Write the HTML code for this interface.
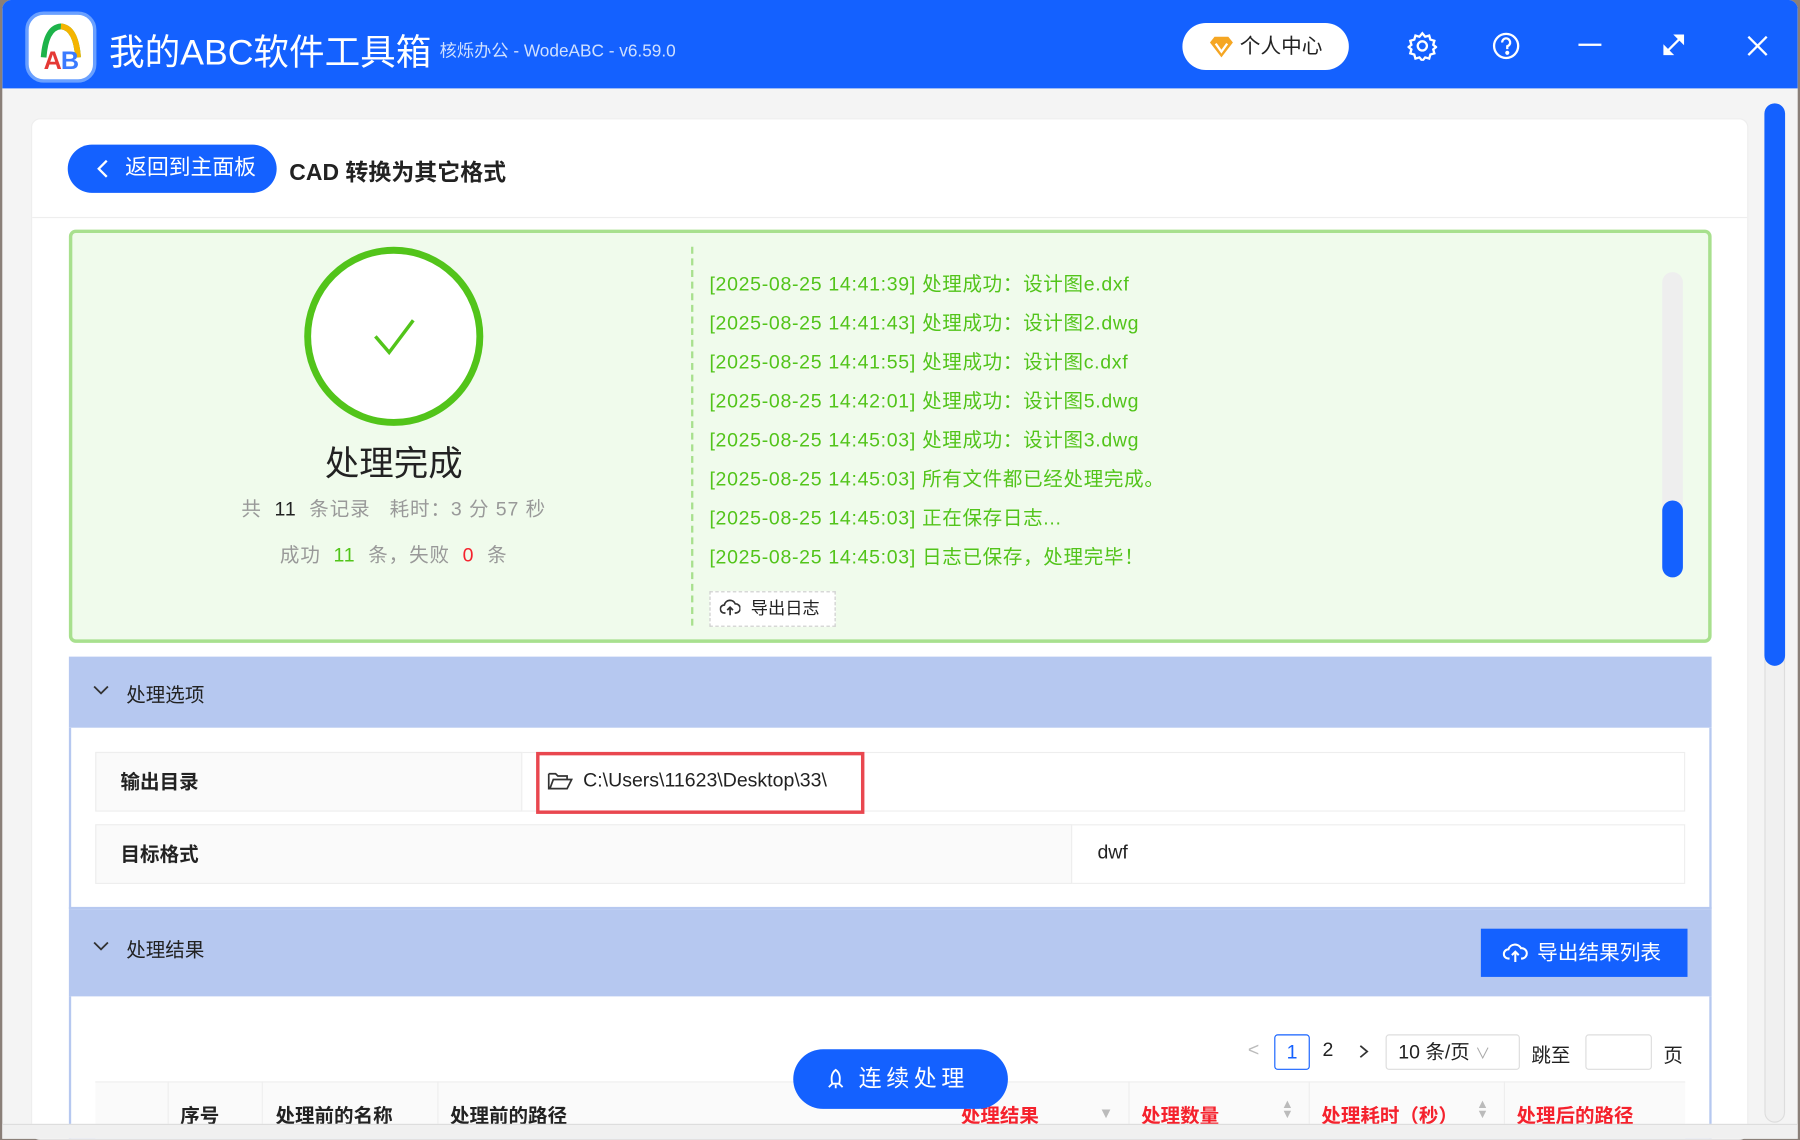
<!DOCTYPE html><html><head><meta charset="utf-8"><style>
*{box-sizing:border-box;margin:0;padding:0}
html,body{width:1800px;height:1139px;overflow:hidden;background:#8a7f78}
#w{position:absolute;left:0;top:0;width:1568px;height:992px;transform:scale(1.14796);transform-origin:0 0;font-family:"Liberation Sans","Noto Sans CJK SC",sans-serif;color:#222}
.a{position:absolute}
.log{position:absolute;left:618px;font-size:17px;color:#52c41a;white-space:nowrap;letter-spacing:0.6px}
.th{position:absolute;top:958px;font-size:17px;font-weight:bold}
</style></head><body><div id="w">
<div class="a" style="left:2px;top:0;width:1564px;height:992px;background:#f4f4f4;border-radius:8px 8px 0 0;overflow:hidden">
<div class="a" style="left:0;top:0;width:1564px;height:77px;background:#1461ff"></div>
</div>
<div class="a" style="left:22px;top:10px;width:62px;height:62px;background:#fff;border-radius:16px;border:3px solid #6aa0ff"></div>
<svg class="a" style="left:22px;top:10px" width="62" height="62"><path d="M16 40 Q18 14 31 13 Q44 14 46 40" fill="none" stroke="#1db34a" stroke-width="5"/><path d="M31 13 Q44 14 46 40" fill="none" stroke="#f5b400" stroke-width="5"/><text x="16" y="50" font-size="22" font-weight="bold" fill="#e53935" font-family="Liberation Sans">A</text><text x="31" y="50" font-size="22" font-weight="bold" fill="#3b7bff" font-family="Liberation Sans">B</text></svg>
<div class="a" style="left:95px;top:20px;font-size:31px;color:#fff">我的ABC软件工具箱</div>
<div class="a" style="left:383px;top:33px;font-size:15px;color:#cfe0ff">核烁办公 - WodeABC - v6.59.0</div>
<div class="a" style="left:1030px;top:20px;width:145px;height:41px;background:#fff;border-radius:21px;font-size:18px;line-height:41px;padding-left:50px">个人中心</div>
<svg class="a" style="left:1052px;top:30px" width="24" height="22"><path d="M2 7 L6 2 H18 L22 7 L12 20Z" fill="#f5a623"/><path d="M7 8 L12 15 L17 8" fill="none" stroke="#fff" stroke-width="2"/></svg>
<svg class="a" style="left:1226px;top:27px" width="26" height="26" fill="none" stroke="#fff" stroke-width="2"><circle cx="13" cy="13" r="4"/><path d="M13 2 l2.5 3 3.5-1 1 3.5 3.5 1-1 3.5 2.5 2-2.5 2 1 3.5-3.5 1-1 3.5-3.5-1-2.5 3-2.5-3-3.5 1-1-3.5-3.5-1 1-3.5-2.5-2 2.5-2-1-3.5 3.5-1 1-3.5 3.5 1z"/></svg>
<svg class="a" style="left:1299px;top:27px" width="26" height="26" fill="none" stroke="#fff" stroke-width="2"><circle cx="13" cy="13" r="10.5"/><path d="M9.5 10 a3.5 3.5 0 1 1 4.5 3.3 v2.5"/><circle cx="14" cy="19" r=".8" fill="#fff"/></svg>
<div class="a" style="left:1375px;top:38px;width:20px;height:2px;background:#fff"></div>
<svg class="a" style="left:1448px;top:29px" width="20" height="20" stroke="#fff" stroke-width="2" fill="#fff"><path d="M3 17 L17 3"/><path d="M2 18 v-6 l6 6z M18 2 v6 l-6-6z"/></svg>
<svg class="a" style="left:1521px;top:30px" width="20" height="20" stroke="#fff" stroke-width="2"><path d="M2 2 L18 18 M18 2 L2 18"/></svg>
<div class="a" style="left:27px;top:103px;width:1496px;height:890px;background:#fff;border-radius:8px;border:1px solid #eee"></div>
<div class="a" style="left:28px;top:189px;width:1494px;height:1px;background:#eee"></div>
<div class="a" style="left:59px;top:126px;width:182px;height:42px;background:#1461ff;border-radius:21px;color:#fff;font-size:19px;line-height:42px;padding-left:50px">返回到主面板</div>
<svg class="a" style="left:83px;top:138px" width="14" height="18" stroke="#fff" stroke-width="2" fill="none"><path d="M10 2 L3 9 L10 16"/></svg>
<div class="a" style="left:252px;top:134px;font-size:20px;font-weight:bold">CAD 转换为其它格式</div>
<div class="a" style="left:60px;top:200px;width:1431px;height:360px;border:3px solid #a8e08e;background:#f0fbec;border-radius:6px"></div>
<svg class="a" style="left:263px;top:213px" width="160" height="160"><circle cx="80" cy="80" r="75" fill="#fff" stroke="#52c41a" stroke-width="6"/><path d="M64 80 L76 94 L97 66" fill="none" stroke="#52c41a" stroke-width="3"/></svg>
<div class="a" style="left:243px;top:379px;width:200px;text-align:center;font-size:30px">处理完成</div>
<div class="a" style="left:143px;top:429px;width:400px;text-align:center;font-size:17px;color:#999;letter-spacing:0.8px">共 <b style="color:#222;font-weight:normal">&nbsp;11&nbsp;</b> 条记录 &nbsp; 耗时：3 分 57 秒</div>
<div class="a" style="left:143px;top:469px;width:400px;text-align:center;font-size:17px;color:#999;letter-spacing:0.8px">成功 <span style="color:#52c41a">&nbsp;11&nbsp;</span> 条，失败 <span style="color:#f5222d">&nbsp;0&nbsp;</span> 条</div>
<div class="a" style="left:602px;top:215px;height:330px;border-left:2px dashed #a8e08e"></div>
<div class="log" style="top:233px">[2025-08-25 14:41:39] 处理成功：设计图e.dxf</div>
<div class="log" style="top:267px">[2025-08-25 14:41:43] 处理成功：设计图2.dwg</div>
<div class="log" style="top:301px">[2025-08-25 14:41:55] 处理成功：设计图c.dxf</div>
<div class="log" style="top:335px">[2025-08-25 14:42:01] 处理成功：设计图5.dwg</div>
<div class="log" style="top:369px">[2025-08-25 14:45:03] 处理成功：设计图3.dwg</div>
<div class="log" style="top:403px">[2025-08-25 14:45:03] 所有文件都已经处理完成。</div>
<div class="log" style="top:437px">[2025-08-25 14:45:03] 正在保存日志...</div>
<div class="log" style="top:471px">[2025-08-25 14:45:03] 日志已保存，处理完毕！</div>
<div class="a" style="left:1448px;top:237px;width:18px;height:266px;background:#eee;border-radius:9px"></div>
<div class="a" style="left:1448px;top:436px;width:18px;height:67px;background:#1461ff;border-radius:9px"></div>
<div class="a" style="left:618px;top:515px;width:110px;height:31px;border:1px dashed #ccc;background:#fff;font-size:15px;line-height:29px;padding-left:35px">导出日志</div>
<svg class="a" style="left:627px;top:522px" width="18" height="16" fill="none" stroke="#333" stroke-width="1.5"><path d="M5 12 H4 a3.5 3.5 0 0 1 0-7 a5 5 0 0 1 9.5-1 a3.5 3.5 0 0 1 0.5 8 H13"/><path d="M9 14 V7 M6.5 9.5 L9 7 L11.5 9.5"/></svg>
<div class="a" style="left:60px;top:572px;width:1431px;height:62px;background:#b6c8f0"></div>
<div class="a" style="left:60px;top:634px;width:1431px;height:158px;border:2px solid #b6c8f0;border-top:0;background:#fff"></div>
<svg class="a" style="left:80px;top:595px" width="16" height="12" stroke="#333" stroke-width="1.6" fill="none"><path d="M2 3 L8 9 L14 3"/></svg>
<div class="a" style="left:110px;top:591px;font-size:17px">处理选项</div>
<div class="a" style="left:83px;top:655px;width:1385px;height:52px;border:1px solid #eee"></div>
<div class="a" style="left:83px;top:655px;width:372px;height:52px;background:#fafafa;border:1px solid #eee;font-size:17px;font-weight:bold;line-height:52px;padding-left:21px">输出目录</div>
<div class="a" style="left:467px;top:655px;width:286px;height:54px;border:3px solid #e9474f"></div>
<svg class="a" style="left:477px;top:671px" width="22" height="18" fill="none" stroke="#333" stroke-width="1.5"><path d="M1 3 V16 H17 L21 8 H5 L2 16 M1 3 H7 L9 5 H17 V8"/></svg>
<div class="a" style="left:508px;top:670px;font-size:17px">C:\Users\11623\Desktop\33\</div>
<div class="a" style="left:83px;top:718px;width:1385px;height:52px;border:1px solid #eee"></div>
<div class="a" style="left:83px;top:718px;width:851px;height:52px;background:#fafafa;border:1px solid #eee;font-size:17px;font-weight:bold;line-height:52px;padding-left:21px">目标格式</div>
<div class="a" style="left:956px;top:733px;font-size:17px">dwf</div>
<div class="a" style="left:60px;top:792px;width:1431px;height:76px;background:#b6c8f0"></div>
<div class="a" style="left:60px;top:868px;width:1431px;height:124px;border:2px solid #b6c8f0;border-top:0;background:#fff"></div>
<svg class="a" style="left:80px;top:818px" width="16" height="12" stroke="#333" stroke-width="1.6" fill="none"><path d="M2 3 L8 9 L14 3"/></svg>
<div class="a" style="left:110px;top:813px;font-size:17px">处理结果</div>
<div class="a" style="left:1290px;top:809px;width:180px;height:42px;background:#1461ff;color:#fff;font-size:18px;line-height:42px;padding-left:49px">导出结果列表</div>
<svg class="a" style="left:1309px;top:821px" width="22" height="18" fill="none" stroke="#fff" stroke-width="1.8"><path d="M6 14 H5 a4 4 0 0 1 0-8 a6 6 0 0 1 11-1 a4 4 0 0 1 1 9 H16"/><path d="M11 17 V8 M8 11 L11 8 L14 11"/></svg>
<div class="a" style="left:1087px;top:905px;font-size:17px;color:#bbb">&lt;</div>
<div class="a" style="left:1110px;top:901px;width:31px;height:31px;border:1px solid #1461ff;border-radius:3px;color:#1461ff;font-size:17px;text-align:center;line-height:29px">1</div>
<div class="a" style="left:1152px;top:905px;font-size:17px">2</div>
<svg class="a" style="left:1182px;top:909px" width="12" height="14" stroke="#333" stroke-width="1.5" fill="none"><path d="M3 2 L9 7 L3 12"/></svg>
<div class="a" style="left:1207px;top:901px;width:117px;height:31px;border:1px solid #ddd;border-radius:3px;font-size:17px;line-height:29px;padding-left:10px">10 条/页 <span style="color:#aaa;font-size:13px">∨</span></div>
<div class="a" style="left:1334px;top:905px;font-size:17px">跳至</div>
<div class="a" style="left:1381px;top:901px;width:58px;height:31px;border:1px solid #ddd;border-radius:3px"></div>
<div class="a" style="left:1449px;top:905px;font-size:17px">页</div>
<div class="a" style="left:83px;top:942px;width:1385px;height:50px;background:#fafafa;border-top:1px solid #eee"></div>
<div class="a" style="left:146px;top:942px;width:1px;height:50px;background:#eee"></div>
<div class="a" style="left:228px;top:942px;width:1px;height:50px;background:#eee"></div>
<div class="a" style="left:381px;top:942px;width:1px;height:50px;background:#eee"></div>
<div class="a" style="left:983px;top:942px;width:1px;height:50px;background:#eee"></div>
<div class="a" style="left:1140px;top:942px;width:1px;height:50px;background:#eee"></div>
<div class="a" style="left:1310px;top:942px;width:1px;height:50px;background:#eee"></div>
<div class="th" style="left:157px">序号</div>
<div class="th" style="left:240px">处理前的名称</div>
<div class="th" style="left:392px">处理前的路径</div>
<div class="th" style="left:837px;color:#f5222d">处理结果</div>
<div class="th" style="left:994px;color:#f5222d">处理数量</div>
<div class="th" style="left:1151px;color:#f5222d">处理耗时（秒）</div>
<div class="th" style="left:1321px;color:#f5222d">处理后的路径</div>
<div class="a" style="left:957px;top:962px;font-size:13px;color:#bbb">▼</div>
<div class="a" style="left:1116px;top:958px;font-size:11px;color:#bbb;line-height:9px">▲<br>▼</div>
<div class="a" style="left:1286px;top:958px;font-size:11px;color:#bbb;line-height:9px">▲<br>▼</div>
<div class="a" style="left:691px;top:914px;width:187px;height:52px;background:#1461ff;border-radius:26px;color:#fff;font-size:20px;line-height:52px;padding-left:57px;letter-spacing:4px">连续处理</div>
<svg class="a" style="left:719px;top:930px" width="18" height="20" fill="none" stroke="#fff" stroke-width="1.6"><path d="M9 2 C5 5 5 10 6 14 H12 C13 10 13 5 9 2Z M6 14 L3 17 M12 14 L15 17 M9 15 V18"/></svg>
<div class="a" style="left:1537px;top:90px;width:18px;height:888px;background:#f0f0f0;border-radius:9px;border:1px solid #ddd"></div>
<div class="a" style="left:1537px;top:90px;width:18px;height:490px;background:#1461ff;border-radius:9px"></div>
<div class="a" style="left:2px;top:979px;width:1564px;height:13px;background:#f0f0f0;border-top:1px solid #ddd"></div>
</div></body></html>
